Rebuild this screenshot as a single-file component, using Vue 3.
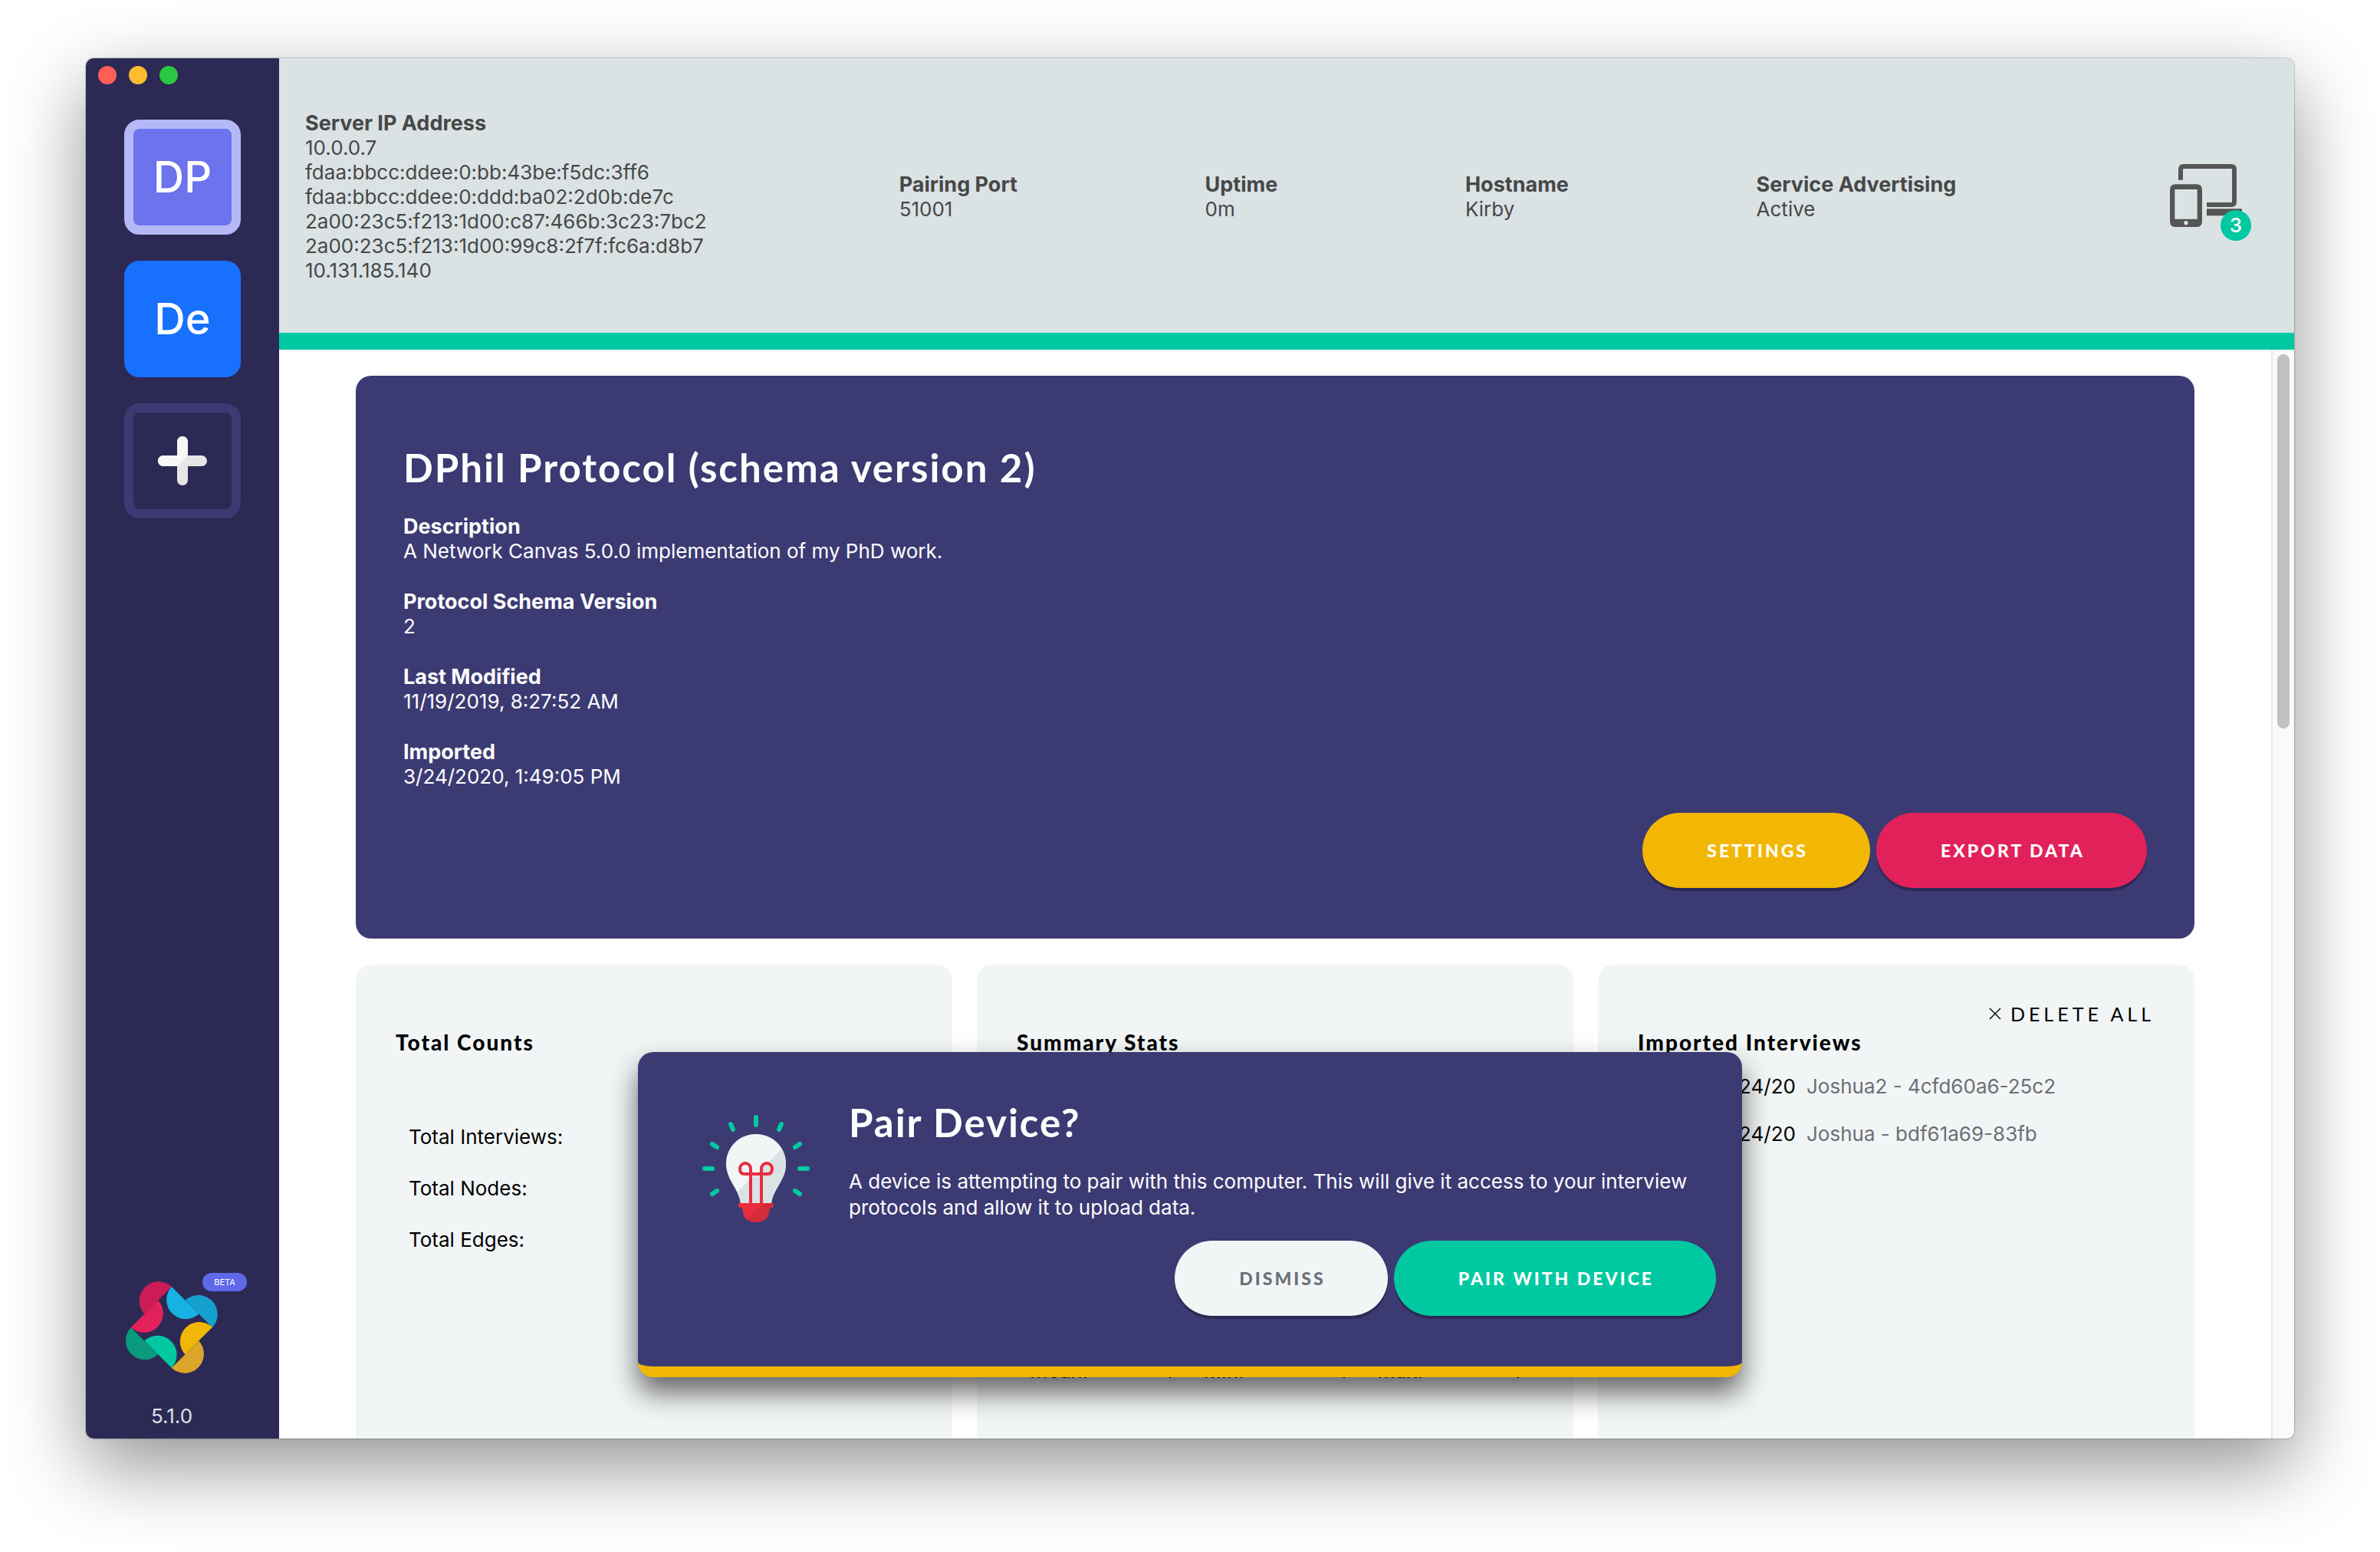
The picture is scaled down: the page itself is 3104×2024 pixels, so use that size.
<script setup>
const serverIps = [
  '10.0.0.7',
  'fdaa:bbcc:ddee:0:bb:43be:f5dc:3ff6',
  'fdaa:bbcc:ddee:0:ddd:ba02:2d0b:de7c',
  '2a00:23c5:f213:1d00:c87:466b:3c23:7bc2',
  '2a00:23c5:f213:1d00:99c8:2f7f:fc6a:d8b7',
  '10.131.185.140',
]
const serverFacts = [
  { label: 'Pairing Port', value: '51001' },
  { label: 'Uptime', value: '0m' },
  { label: 'Hostname', value: 'Kirby' },
  { label: 'Service Advertising', value: 'Active' },
]
const protocolFacts = [
  { label: 'Description', value: 'A Network Canvas 5.0.0 implementation of my PhD work.' },
  { label: 'Protocol Schema Version', value: '2' },
  { label: 'Last Modified', value: '11/19/2019, 8:27:52 AM' },
  { label: 'Imported', value: '3/24/2020, 1:49:05 PM' },
]
const counts = ['Total Interviews:', 'Total Nodes:', 'Total Edges:']
const stats = [
  { label: 'Mean:', value: '1' },
  { label: 'Min:', value: '1' },
  { label: 'Max:', value: '1' },
]
const interviews = [
  { date: '3/24/20', name: 'Joshua2 - 4cfd60a6-25c2' },
  { date: '3/24/20', name: 'Joshua - bdf61a69-83fb' },
]
</script>

<template>
  <div class="desktop">
    <div class="window">
      <aside class="sidebar">
        <div class="lights">
          <span class="light close"></span>
          <span class="light minimise"></span>
          <span class="light zoom"></span>
        </div>
        <nav class="protocols">
          <button class="tile current">DP</button>
          <button class="tile other">De</button>
          <button class="tile add" aria-label="Add protocol">
            <svg width="64" height="64" viewBox="0 0 64 64">
              <path d="M32 7V57M7 32H57" stroke="#e6e6e6" stroke-width="14" stroke-linecap="round" />
              <path d="M7 25H25V7a7 7 0 0 1 14 0V25L25 39H7a7 7 0 0 1 0-14z" fill="#f7f7f7" />
            </svg>
          </button>
        </nav>
        <div class="about">
          <div class="brand">
            <svg width="122" height="122" viewBox="100 150 365 365">
              <path d="M282 174A75 75 0 0 0 176 280z" fill="#cb1c56" />
              <path d="M229 227A75 75 0 0 1 123 333z" fill="#e2215b" />
              <path d="M282 174A75 75 0 0 0 388 280z" fill="#17b2e3" />
              <path d="M335 227A75 75 0 0 1 441 333z" fill="#15a1cd" />
              <path d="M441 332A75 75 0 0 0 335 438z" fill="#f2b705" />
              <path d="M388 385A75 75 0 0 1 282 491z" fill="#daa528" />
              <path d="M123 333A75 75 0 0 0 229 439z" fill="#0a9a7c" />
              <path d="M176 385A75 75 0 0 1 282 491z" fill="#00c9a2" />
            </svg>
            <span class="beta">BETA</span>
          </div>
          <span class="version">5.1.0</span>
        </div>
      </aside>

      <div class="main">
        <header class="server">
          <dl class="fact addresses">
            <dt>Server IP Address</dt>
            <dd v-for="ip in serverIps" :key="ip">{{ ip }}</dd>
          </dl>
          <dl v-for="fact in serverFacts" :key="fact.label" class="fact">
            <dt>{{ fact.label }}</dt>
            <dd>{{ fact.value }}</dd>
          </dl>
          <button class="devices" aria-label="Paired devices">
            <svg width="94" height="82" viewBox="270 162 282 246">
              <g fill="none" stroke="#545554" stroke-width="18">
                <path d="M312 224V183q0-12 12-12H510q12 0 12 12V309q0 12-12 12H414" />
              </g>
              <path d="M414 337H549q3 0 3 3V349q0 15-15 15H414z" fill="#545554" />
              <path fill-rule="evenodd" d="M292 241H374q22 0 22 22V386q0 22-22 22H292q-22 0-22-22V263q0-22 22-22zM289 261V377H377V261zM333 384a8 8 0 1 0 0 16a8 8 0 1 0 0-16z" fill="#545554" />
            </svg>
            <span class="badge">3</span>
          </button>
        </header>

        <div class="scroller">
          <main class="content">
            <section class="protocol">
              <h1>DPhil Protocol (schema version 2)</h1>
              <dl class="details">
                <div v-for="fact in protocolFacts" :key="fact.label">
                  <dt>{{ fact.label }}</dt>
                  <dd>{{ fact.value }}</dd>
                </div>
              </dl>
              <div class="actions">
                <button class="pill settings">Settings</button>
                <button class="pill export">Export Data</button>
              </div>
            </section>

            <div class="panels">
              <section class="panel">
                <div class="tools"></div>
                <h2>Total Counts</h2>
                <ul class="counts">
                  <li v-for="label in counts" :key="label">{{ label }}</li>
                </ul>
              </section>
              <section class="panel">
                <div class="tools"></div>
                <h2>Summary Stats</h2>
                <dl class="stats">
                  <div v-for="stat in stats" :key="stat.label">
                    <dt>{{ stat.label }}</dt>
                    <dd>{{ stat.value }}</dd>
                  </div>
                </dl>
              </section>
              <section class="panel">
                <div class="tools">
                  <button class="delete">
                    <svg width="16" height="16" viewBox="0 0 16 16">
                      <path d="M1 1L15 15M15 1L1 15" stroke="#000" stroke-width="1.4" />
                    </svg>
                    Delete All
                  </button>
                </div>
                <h2>Imported Interviews</h2>
                <ul class="interviews">
                  <li v-for="item in interviews" :key="item.name">
                    <span class="date">{{ item.date }}</span>
                    <span class="name">{{ item.name }}</span>
                  </li>
                </ul>
              </section>
            </div>
          </main>
          <div class="track"><div class="thumb"></div></div>
        </div>
      </div>

      <div class="dialog" role="dialog" aria-labelledby="pair-title">
        <div class="message">
          <svg class="bulb" width="140" height="140" viewBox="0 0 140 140">
            <defs>
              <clipPath id="glass">
                <path d="M70 25C92 25 109 42 109 64C109 85 93 95 90 115H50C47 95 31 85 31 64C31 42 48 25 70 25z" />
              </clipPath>
              <clipPath id="socket">
                <path d="M47 115H93V118q0 3-3 3H88Q87 140 70 140Q53 140 52 121H50q-3 0-3-3z" />
              </clipPath>
            </defs>
            <g clip-path="url(#glass)">
              <rect width="140" height="140" fill="#f2f5f6" />
              <path d="M102 46L46 100V140H140V30z" fill="#dae2e4" />
            </g>
            <path d="M63 116V70a7 7 0 0 0-14 0q0 7 6 7H85q6 0 6-7a7 7 0 0 0-14 0V116" fill="none" stroke="#e82d3f" stroke-width="4" />
            <g clip-path="url(#socket)">
              <rect width="140" height="140" fill="#e82d3f" />
              <path d="M81 115L56 138V140H100V115z" fill="#d22c3a" />
            </g>
            <g stroke="#00c9a2" stroke-width="6" stroke-linecap="round">
              <path d="M70 3V13M103 12L100 19M37 12L40 19M127 38L121 42M13 38L19 42M127 70H137M3 70H13M121 99L127 103M19 99L13 103" />
            </g>
          </svg>
          <div class="copy">
            <h1 id="pair-title">Pair Device?</h1>
            <p>A device is attempting to pair with this computer. This will give it access to your interview protocols and allow it to upload data.</p>
          </div>
        </div>
        <div class="actions">
          <button class="pill dismiss">Dismiss</button>
          <button class="pill pair">Pair With Device</button>
        </div>
      </div>
    </div>
  </div>
</template>

<style>
body {
  margin: 0;
  background: #fff;
}
</style>

<style scoped>
* {
  box-sizing: border-box;
}
dl,
dd,
ul,
h1,
h2,
p {
  margin: 0;
  padding: 0;
}
ul {
  list-style: none;
}
svg {
  display: block;
}
button {
  margin: 0;
  padding: 0;
  border: 0;
  background: none;
  color: inherit;
  font: inherit;
}
.desktop {
  height: 100vh;
  padding: 76px 112px 148px;
  font-family: Inter, "Liberation Sans", sans-serif;
  font-size: 26px;
  line-height: 32px;
  color: #000;
}
.window {
  position: relative;
  display: flex;
  height: 100%;
  border-radius: 10px;
  background: #fff;
  box-shadow: 0 0 2px rgba(0, 0, 0, 0.6), 0 36px 100px rgba(0, 0, 0, 0.43);
}

/* Sidebar */
.sidebar {
  display: flex;
  flex-direction: column;
  width: 252px;
  border-radius: 10px 0 0 10px;
  background: #2d2955;
}
.lights {
  display: flex;
  gap: 16px;
  padding: 10px 16px 46px;
}
.light {
  width: 24px;
  height: 24px;
  border-radius: 50%;
}
.close {
  background: #ff5f57;
}
.minimise {
  background: #febc2e;
}
.zoom {
  background: #28c840;
}
.protocols {
  display: flex;
  flex-direction: column;
  align-items: center;
  gap: 34px;
}
.tile {
  display: flex;
  align-items: center;
  justify-content: center;
  width: 152px;
  height: 150px;
  border-radius: 20px;
  color: #fff;
  font-size: 56px;
  font-weight: 500;
  line-height: 64px;
}
.current {
  border: 12px solid #b5b8f7;
  background: #6c73ec;
}
.other {
  height: 152px;
  background: #1870ff;
}
.add {
  border: 12px solid #3c3a73;
}
.about {
  display: flex;
  flex-direction: column;
  align-items: center;
  gap: 39px;
  margin-top: auto;
  padding: 0 28px 13px 0;
}
.brand {
  position: relative;
}
.beta {
  position: absolute;
  top: -10px;
  left: 101px;
  width: 58px;
  height: 24px;
  border-radius: 12px;
  background: #6068e8;
  color: #fff;
  font-size: 11px;
  line-height: 24px;
  text-align: center;
}
.version {
  color: #dae2e4;
}

/* Server bar */
.main {
  display: flex;
  flex: 1;
  flex-direction: column;
  min-width: 0;
}
.server {
  display: flex;
  align-items: center;
  justify-content: space-between;
  min-height: 380px;
  padding: 0 68px 0 34px;
  border-bottom: 22px solid #00c9a2;
  border-radius: 0 10px 0 0;
  background: #dae2e4;
  color: #474747;
}
.fact {
  padding-top: 4px;
}
.addresses {
  min-width: 530px;
}
dt {
  font-size: 27px;
  font-weight: 700;
}
.devices {
  position: relative;
  margin-left: 34px;
}
.badge {
  position: absolute;
  top: 60px;
  left: 66px;
  width: 40px;
  height: 40px;
  border-radius: 50%;
  background: #00c9a2;
  color: #fff;
  font-weight: 500;
  line-height: 40px;
  text-align: center;
}

/* Scrolling area */
.scroller {
  display: flex;
  flex: 1;
  min-height: 0;
  overflow: hidden;
  border-radius: 0 0 10px 0;
}
.content {
  display: flex;
  flex: 1;
  flex-direction: column;
  gap: 34px;
  padding: 34px 100px 0;
}
.track {
  width: 30px;
  padding: 6px 6px 0;
  border-left: 2px solid #e8e8e8;
  background: #fafafa;
}
.thumb {
  width: 16px;
  height: 488px;
  border-radius: 8px;
  background: #c1c1c1;
}
h1,
h2,
.pill,
.delete {
  font-family: Lato, "Open Sans", sans-serif;
}
h1 {
  font-size: 51px;
  font-weight: 700;
  line-height: 60px;
  letter-spacing: 2px;
}
.protocol {
  flex: none;
  padding: 90px 62px 66px;
  border-radius: 20px;
  background: #3c3a73;
  color: #fff;
}
.details {
  display: flex;
  flex-direction: column;
  gap: 34px;
  padding: 31px 0;
}
.actions {
  display: flex;
  justify-content: flex-end;
  gap: 8px;
}
.pill {
  height: 98px;
  padding: 0 81px 0 84px;
  border-radius: 49px;
  box-shadow: 0 4px 0 #2d2955;
  color: #fff;
  font-size: 23px;
  font-weight: 900;
  letter-spacing: 3px;
  text-transform: uppercase;
}
.settings {
  background: #f2b705;
}
.export {
  background: #e2215b;
}
.dismiss {
  background: #f2f5f6;
  color: #6c6f75;
}
.pair {
  background: #00c9a2;
}

/* Panels */
.panels {
  display: grid;
  flex: none;
  grid-template-columns: repeat(3, 1fr);
  gap: 32px;
}
.panel {
  min-height: 720px;
  padding: 52px;
  border-radius: 20px;
  background: #f2f5f6;
}
.tools {
  display: flex;
  justify-content: flex-end;
  height: 32px;
}
.delete {
  display: flex;
  align-items: center;
  gap: 12px;
  height: 24px;
  font-size: 25px;
  letter-spacing: 5px;
  text-transform: uppercase;
}
h2 {
  font-size: 28px;
  font-weight: 900;
  line-height: 34px;
  letter-spacing: 2px;
}
.counts {
  padding: 73px 17px 0;
  line-height: 67px;
}
.stats {
  display: grid;
  grid-template-columns: repeat(3, 1fr);
  gap: 40px;
  padding: 396px 17px 0;
}
.stats div {
  display: flex;
  justify-content: space-between;
}
.stats dt {
  font-size: 26px;
  font-weight: 400;
}
.interviews {
  padding-top: 10px;
  line-height: 62px;
}
.interviews li {
  display: flex;
  gap: 14px;
}
.date {
  width: 206px;
  text-align: right;
}
.name {
  color: #6c6f75;
}

/* Pairing prompt */
.dialog {
  position: absolute;
  bottom: 80px;
  left: 50%;
  width: 1440px;
  max-width: 100%;
  padding: 62px 34px 66px 84px;
  border-bottom: 14px solid #f2b705;
  border-radius: 20px;
  background: #3c3a73;
  box-shadow: 0 20px 36px rgba(0, 0, 0, 0.6);
  color: #fff;
  transform: translateX(-50%);
}
.message {
  display: flex;
  gap: 51px;
  padding-bottom: 24px;
}
.bulb {
  flex: none;
  margin-top: 20px;
}
.copy p {
  padding-top: 30px;
  line-height: 34px;
}
</style>
